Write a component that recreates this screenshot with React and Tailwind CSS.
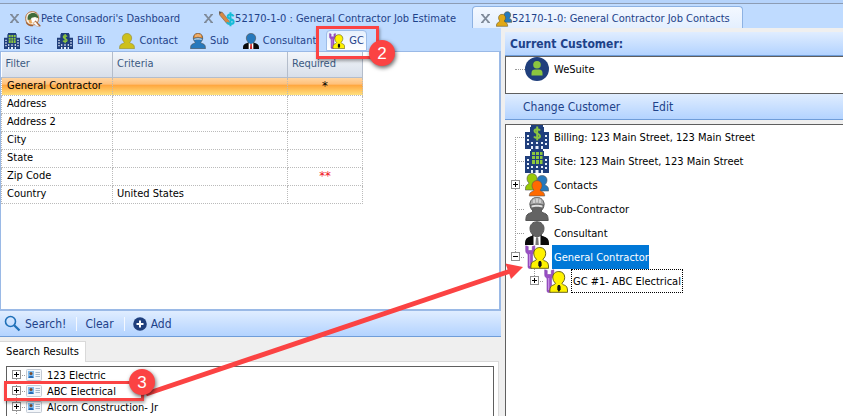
import React, { useState } from 'react';

/* ---------- Icons ---------- */

const Building = ({ size = 16, dollar = false }) => (
  <svg width={size} height={size} viewBox="0 0 24 24" className="shrink-0">
    <path fill="#203f7c" d="M6 0h12v2h1v5h5v17H0V7h5V2h1z" />
    <path
      fill="#e8f0fb"
      d="M2 10h2v2H2zM2 14h2v2H2zM2 18h2v2H2zM20 10h2v2h-2zM20 14h2v2h-2zM20 18h2v2h-2zM6 17h2v2H6zM11 17h2v2h-2zM16 17h2v2h-2zM6 21h2v3H6zM10.500 21h3v3h-3zM16 21h2v3h-2z"
    />
    {dollar ? (
      <path
        fill="none"
        stroke="#8cc63f"
        strokeWidth="2"
        d="M15 5.500C14 3.600 9.500 3.600 9.500 6S15 8.500 15 11S10.500 13.800 9 11.500M12.200 1.500v14"
      />
    ) : (
      <path fill="#8cc63f" d="M7 3h3v3H7zM11 3h3v3h-3zM15 3h2.500v3H15zM7 7h3v3H7zM11 7h3v3h-3zM15 7h2.500v3H15zM7 11h3v4H7zM11 11h3v4h-3zM15 11h2.500v4H15z" />
    )}
  </svg>
);

const bodyPath =
  'M12 .7C8 .7 5 3.500 5 7.500c0 3 1.500 5 3 6.500-1 2-3 1.700-5 3C1.200 18.300 1 20 .8 23.500h22.400c-.2-3.500-.4-5.200-2.200-6.500-2-1.300-4-1-5-3 1.500-1.500 3-3.500 3-6.500 0-4-3-6.800-7-6.800z';

const Person = ({ size = 16, fill, stroke = '#555', helmet, suit }) => (
  <svg width={size} height={size} viewBox="0 0 24 24" className="shrink-0">
    <path d={bodyPath} fill={fill} stroke={stroke} strokeWidth="1" />
    {helmet && (
      <>
        <path d="M5 8C5 3 8 .3 12 .3S19 3 19 8c-4-1.500-10-1.500-14 0z" fill={helmet} stroke={stroke} strokeWidth=".6" />
        <path d="M9 6V2.500M12 5.500V1.500M15 6V2.500" stroke="#f4f4f4" strokeWidth="1" />
        <path d="M6.500 8.500c3-1 8-1 11 0v2c-3-1-8-1-11 0z" fill="#e2e2e2" />
      </>
    )}
    {suit && (
      <>
        <path d="M0 24c0-4 .5-6.500 3-7.500l5-2 4 2 4-2 5 2c2.500 1 3 3.500 3 7.500z" fill="#0a0a0a" />
        <path d="M8.500 15l3.500 1.500 3.500-1.500v9h-7z" fill="#fff" />
        <path d="M11 16.500h2.200l.6 7.500h-3.400z" fill={suit} />
      </>
    )}
  </svg>
);

const GcIcon = ({ size = 16 }) => (
  <svg width={size} height={size} viewBox="0 0 24 24" className="shrink-0">
    <path
      d="M.7.800v5c0 2 1.300 3 2.300 3.500V22c0 2 4.500 2 4.500 0V9.300C8.500 8.800 9.800 7.800 9.800 5.800v-5L7.300 1.500v4H3.200v-4z"
      fill="#9a4fc4"
      stroke="#8344ae"
      strokeWidth=".6"
    />
    <path d="M4.700 9v12" stroke="#cf9fec" strokeWidth="1" />
    <path
      d="M14.800 2.500c-3.700 0-6 2.500-6 5.800 0 2.500 1 4.500 2.700 5.900-.7 1.800-2.300 1.600-3.800 2.600-1.600 1.200-1.800 3-1.900 6.500h17.800c-.1-3.500-.3-5.300-1.900-6.500-1.500-1-3.100-.8-3.800-2.600 1.700-1.400 2.800-3.400 2.800-5.900 0-3.300-2.300-5.800-5.900-5.800z"
      fill="#fff200"
      stroke="#6b651c"
      strokeWidth="1"
    />
    <path d="M14 16h1.800l.8 1.800v2.700L14.900 23l-1.600-2.500v-2.700z" fill="#141414" />
  </svg>
);

const Group = ({ size = 16 }) => (
  <svg width={size} height={size} viewBox="0 0 24 24" className="shrink-0" stroke="#555" strokeWidth=".6">
    <path d="M17 2.500c-3 0-4.800 2-4.800 4.500 0 2 .8 3.500 2 4.500-.8 2-3.200 1-3.200 6.500h12.700c0-6-2.900-4.500-3.700-6.500 1.200-1 2-2.500 2-4.500 0-2.500-2-4.500-5-4.500z" fill="#2679bd" />
    <path d="M7 .5C4 .5 2 2.700 2 5.500c0 2 .8 3.500 2 4.500C3.200 12 .3 11 .3 17H13c0-6-2.200-5-3-7 1.200-1 2-2.500 2-4.500C12 2.700 10 .5 7 .5z" fill="#99c906" />
    <path d="M12 7.500c-3 0-5 2.200-5 5 0 2 .8 3.500 2 4.500-.8 2-4.700 1-4.700 6h15.400c0-5-3.900-4-4.700-6 1.200-1 2-2.500 2-4.500 0-2.800-2-5-5-5z" fill="#ff6a00" />
  </svg>
);

const Pair = () => (
  <svg width="16" height="16" viewBox="0 0 24 24" className="shrink-0" stroke="#5b5020" strokeWidth=".8">
    <path d="M17 1c-3 0-5 2.200-5 5 0 2 .8 3.500 2 4.500-.8 2-3 1-3 6.500h12.700c0-6-2.900-4.500-3.700-6.500 1.200-1 2-2.500 2-4.500 0-2.800-2-5-5-5z" fill="#2679bd" />
    <path d="M9 5c-3.200 0-5.200 2.300-5.200 5.300 0 2 .8 3.700 2 4.700-.8 2.200-5.300 1.500-5.300 8h17c0-6.500-4.500-5.800-5.300-8 1.200-1 2-2.700 2-4.700C14.200 7.300 12.200 5 9 5z" fill="#e0a816" />
  </svg>
);

const DashboardIcon = () => (
  <svg width="16" height="16" viewBox="0 0 24 24" className="shrink-0">
    <path d="M11 1c6 0 9.500 4 9.500 9.500S18 21 11 21 1 17 1 11 5 1 11 1z" fill="#f8efe0" stroke="#b5713e" strokeWidth="1.500" />
    <path d="M4 13c-1-7 3-10 8-10 5 0 8 3 8 8l-5-2-5 1-2 4z" fill="#3f6b3a" />
    <path d="M5 13h5l1 5-4 1z" fill="#e9a95e" />
    <path d="M10 11l6-1 2 5-4 3-4-2z" fill="#fff" />
    <path d="M2 17c2 4 6 5 10 5M15 15l8 8" stroke="#a45f30" strokeWidth="2" fill="none" />
    <path d="M12 18l4-2 5 7h-3z" fill="#fff" stroke="#c79067" strokeWidth=".8" />
  </svg>
);

const EstimateIcon = () => (
  <svg width="16" height="16" viewBox="0 0 24 24" className="shrink-0">
    <path d="M0 1l5 1 11 14v4l-4-1L1 6z" fill="#d98942" stroke="#7a6a5a" strokeWidth="1" />
    <path d="M0 1l4 .8L1 5z" fill="#555" />
    <path
      d="M22 8c-2-4-9-3.500-9 .5s9 3 9 7.500-8 4.500-10 1M17.200 2v21"
      fill="none"
      stroke="#16bcd8"
      strokeWidth="3"
    />
  </svg>
);

const CardIcon = () => (
  <svg width="16" height="12" viewBox="0 0 16 12" className="shrink-0">
    <rect x=".5" y=".5" width="15" height="11" rx="1" fill="#f3f6fa" stroke="#c3cad4" />
    <rect x="2" y="2" width="6" height="7" fill="#7fbcf0" />
    <circle cx="5" cy="4.500" r="1.500" fill="#7c4a2a" />
    <path d="M2.500 9c0-3 5-3 5 0z" fill="#2569b5" />
    <path d="M9.500 3.500H14M9.500 5.500H14M9.500 7.500H14" stroke="#a3b6ca" />
  </svg>
);

const SearchIcon = () => (
  <svg width="17" height="17" viewBox="0 0 17 17" className="shrink-0" fill="none" stroke="#1f70b8">
    <circle cx="6.500" cy="6.500" r="5" strokeWidth="1.600" />
    <path d="M10.200 10.200l5.300 5.300" strokeWidth="2.300" />
  </svg>
);

const AddIcon = () => (
  <svg width="14" height="14" viewBox="0 0 14 14" className="shrink-0">
    <circle cx="7" cy="7" r="6.800" fill="#1f3f7d" />
    <path d="M7 3.500v7M3.500 7h7" stroke="#fff" strokeWidth="2" />
  </svg>
);

const CustomerIcon = () => (
  <svg width="24" height="24" viewBox="0 0 24 24" className="shrink-0">
    <circle cx="12" cy="12" r="12" fill="#203f7c" />
    <circle cx="12" cy="7.800" r="3.800" fill="#8cc63f" />
    <path d="M6.500 18.500V16c0-2.500 1.500-3.500 3.500-3.500h4c2 0 3.500 1 3.500 3.500v2.500z" fill="#8cc63f" />
  </svg>
);

const CloseIcon = () => (
  <svg width="9" height="9" viewBox="0 0 9 9">
    <path d="M1 .5l7 8M8 .5l-7 8" stroke="#7f8a99" strokeWidth="1.800" />
    <path d="M0 .5h2.500M6.500.5H9M0 8.500h2.500M6.500 8.500H9" stroke="#7f8a99" />
  </svg>
);

/* ---------- Tree connectors ---------- */

// Dotted guide lines, with an optional plus / minus box on top
const Connector = ({ height, first, last, state, onToggle, label }) => {
  const mid = height / 2;
  const lines = (
    <svg width="18" height={height} viewBox={`0 0 18 ${height}`} className="block shrink-0">
      <g stroke="#999" strokeDasharray="1 1" shapeRendering="crispEdges">
        <path d={`M8.500 ${first ? mid : 0}V${last ? mid : height}`} />
        <path d={`M8 ${mid + 0.5}H18`} />
      </g>
      {state && (
        <g shapeRendering="crispEdges">
          <rect x="4.500" y={mid - 4.5} width="8" height="8" fill="#fff" stroke="#919191" />
          <path d={`M6 ${mid - 0.5}h5`} stroke="#000" />
          {state === 'closed' && <path d={`M8.500 ${mid - 3}v5`} stroke="#000" />}
        </g>
      )}
    </svg>
  );
  if (!state) return lines;
  return (
    <button type="button" aria-label={label} onClick={onToggle} className="shrink-0">
      {lines}
    </button>
  );
};

/* ---------- Data ---------- */

const tabs = [
  { label: "Pete Consadori's Dashboard", icon: <DashboardIcon />, box: 'pl-2.5' },
  { label: '52170-1-0 : General Contractor Job Estimate', icon: <EstimateIcon />, box: 'pl-6 pr-4' },
  { label: '52170-1-0: General Contractor Job Contacts', icon: <Pair />, active: true },
];

const filters = [
  { name: 'General Contractor', required: '*', selected: true },
  { name: 'Address' },
  { name: 'Address 2' },
  { name: 'City' },
  { name: 'State' },
  { name: 'Zip Code', required: '**' },
  { name: 'Country', criteria: 'United States' },
];

const results = ['123 Electric', 'ABC Electrical', 'Alcorn Construction- Jr'];

const contacts = [
  { label: 'Billing: 123 Main Street, 123 Main Street', icon: <Building size={24} dollar /> },
  { label: 'Site: 123 Main Street, 123 Main Street', icon: <Building size={24} /> },
  { label: 'Contacts', icon: <Group size={24} />, state: 'closed' },
  { label: 'Sub-Contractor', icon: <Person size={24} fill="#636363" helmet="#aaa" /> },
  { label: 'Consultant', icon: <Person size={24} fill="#636363" suit="#777" /> },
];

const bar = 'bg-linear-to-b from-[#e0edff] to-[#b3d3ff] border-b border-[#6f9dd9]';

const Badge = ({ children, place }) => (
  <span
    className={`absolute z-10 flex size-[26px] items-center justify-center rounded-full bg-[#fb4343] font-['Liberation_Sans',sans-serif] text-[17px] leading-none text-white shadow-[1px_2px_4px_rgba(0,0,0,0.6)] ${place}`}
  >
    {children}
  </span>
);

const ToolButton = ({ icon, label, box = '' }) => (
  <button type="button" className={`flex items-center gap-1 ${box}`}>
    {icon}
    {label}
  </button>
);

/* ---------- Page ---------- */

const App = () => {
  const [gcOpen, setGcOpen] = useState(true);

  return (
    <div className="relative flex h-screen flex-col overflow-hidden bg-[#efefef] font-['DejaVu_Sans_Condensed','Noto_Sans',sans-serif] text-[11px] leading-4 text-black">
      {/* Document tabs */}
      <div className="h-[3px] shrink-0 bg-[#b5d3fb]" />
      <nav className="flex h-[25px] shrink-0 items-end border-t border-[#8c9cb4] bg-[#bfdbff] text-[#1e4289]">
        {tabs.map((tab) => (
          <div
            key={tab.label}
            className={
              tab.active
                ? 'flex h-[22px] items-center rounded-t-sm border border-b-0 border-[#8db2e3] bg-linear-to-b from-[#f3f8ff] to-[#e4effe] pt-0.5 pr-3 pl-2'
                : `flex h-[22px] items-center pt-[3px] ${tab.box}`
            }
          >
            <button type="button" aria-label={`Close ${tab.label}`} className="mr-1.5">
              <CloseIcon />
            </button>
            <button type="button" className="flex items-center whitespace-nowrap">
              {tab.icon}
              {tab.label}
            </button>
          </div>
        ))}
      </nav>

      <div className="grid min-h-0 flex-1 grid-cols-[501fr_338fr] gap-x-1">
        {/* Left side: filters and search results */}
        <section className="flex min-h-0 min-w-0 flex-col">
          <div className="flex h-[23px] shrink-0 items-center bg-[#bfdbff] pt-0.5 pl-1 text-[#1e4289]">
            <ToolButton icon={<Building />} label="Site" box="mr-3.5" />
            <ToolButton icon={<Building dollar />} label="Bill To" box="mr-3.5" />
            <ToolButton icon={<Person fill="#cdc01c" stroke="#96903a" />} label="Contact" box="mr-3" />
            <ToolButton icon={<Person fill="#2679bd" helmet="#e88b2d" />} label="Sub" box="mr-3.5" />
            <ToolButton icon={<Person fill="#2679bd" suit="#d12a2a" />} label="Consultant" box="mr-2.5" />
            <div className="relative">
              <button
                type="button"
                aria-pressed="true"
                className="flex h-[21px] items-center gap-1 rounded-t-sm border border-[#9dbde8] bg-linear-to-b from-[#e6f0fd] to-white px-0.5"
              >
                <GcIcon />
                GC
              </button>
              <span className="absolute -top-1 -right-3 -bottom-2 -left-2.5 z-10 border-3 border-[#fb4343] shadow-[1px_2px_3px_rgba(0,0,0,0.35)]" />
              <Badge place="-right-7 top-2.5">2</Badge>
            </div>
          </div>

          <div className="h-[260px] shrink-0 border border-r-2 border-b-2 border-[#9ab9e6] bg-white">
            <table className="w-[361px] table-fixed border-collapse text-left">
              <colgroup>
                <col className="w-[111px]" />
                <col className="w-[175px]" />
                <col className="w-[75px]" />
              </colgroup>
              <thead>
                <tr className="h-[25px] bg-linear-to-b from-[#f3f6fa] to-[#d8dfea] text-[#3b5a82]">
                  <th className="border-r border-b border-[#b4bdcb] px-1 font-normal">Filter</th>
                  <th className="border-r border-b border-[#b4bdcb] px-1 font-normal">Criteria</th>
                  <th className="border-r border-b border-[#b4bdcb] px-1 font-normal">Required</th>
                </tr>
              </thead>
              <tbody>
                {filters.map((row) => (
                  <tr
                    key={row.name}
                    className={
                      row.selected
                        ? 'h-[18px] bg-[linear-gradient(#ffd9a8_0%,#ffc07a_40%,#ffa63e_45%,#ffe07e_100%)]'
                        : 'h-[18px]'
                    }
                  >
                    <td className="border border-dotted border-[#bbb] p-0 pl-[5px] whitespace-nowrap">{row.name}</td>
                    <td className="border border-dotted border-[#bbb] p-0 pl-1">{row.criteria}</td>
                    <td
                      className={`border border-dotted border-[#bbb] p-0 text-center text-[13px] ${
                        row.selected ? 'text-black' : 'text-[#f01020]'
                      }`}
                    >
                      {row.required}
                    </td>
                  </tr>
                ))}
              </tbody>
            </table>
          </div>

          <div className={`flex h-[26px] shrink-0 items-center pl-1 text-[12px] text-[#1e4289] ${bar}`}>
            <ToolButton icon={<SearchIcon />} label="Search!" />
            <span className="mr-2 ml-2.5 h-3.5 w-px bg-[#f4f8ff]" />
            <ToolButton label="Clear" />
            <span className="mr-2 ml-2.5 h-3.5 w-px bg-[#f4f8ff]" />
            <ToolButton icon={<AddIcon />} label="Add" />
          </div>

          <div className="mt-1 flex h-5 shrink-0">
            <button type="button" className="z-1 -mb-px w-[86px] border-t border-r border-[#d9d9d9] bg-white">
              Search Results
            </button>
          </div>
          <div className="mr-0.5 min-h-0 flex-1 border-t border-r border-[#d9d9d9] bg-white pt-1 pr-1 pl-1.5">
            <div className="h-full border border-b-0 border-[#5f5f5f]">
              {results.map((name, i) => (
                <div key={name} className="relative flex h-4 items-center pl-px">
                  <Connector height={16} first={i === 0} state="closed" label={`Expand ${name}`} />
                  <CardIcon />
                  <span className="ml-[5px] pt-px">{name}</span>
                  {i === 1 && (
                    <>
                      <span className="absolute -top-0.5 -left-[3px] z-10 h-5 w-[140px] border-3 border-[#fb4343] shadow-[1px_2px_3px_rgba(0,0,0,0.35)]" />
                      <Badge place="left-[122px] -top-3.5">3</Badge>
                    </>
                  )}
                </div>
              ))}
            </div>
          </div>
        </section>

        {/* Right side: current customer and job contacts */}
        <section className="flex min-h-0 min-w-0 flex-col pt-1">
          <h2 className={`flex h-6 shrink-0 items-center pl-[5px] text-[12px] font-bold text-[#1e4289] ${bar}`}>
            Current Customer:
          </h2>
          <div className="h-[38px] shrink-0 border border-r-0 border-[#5f5f5f] bg-white">
            <div className="flex h-6 items-center pl-[9px]">
              <span className="w-2.5 border-t border-dotted border-[#999]" />
              <CustomerIcon />
              <span className="ml-[5px] pt-px">WeSuite</span>
            </div>
          </div>
          <div className={`flex h-[26px] shrink-0 items-center gap-8 pl-[18px] text-[12px] text-[#1e4289] ${bar}`}>
            <button type="button">Change Customer</button>
            <button type="button">Edit</button>
          </div>
          <div className="mt-1 min-h-0 flex-1 border border-r-0 border-b-0 border-[#5f5f5f] bg-white">
            {contacts.map((item, i) => (
              <div key={item.label} className="flex h-6 items-center pl-px">
                <Connector height={24} first={i === 0} state={item.state} label={`Expand ${item.label}`} />
                {item.icon}
                <span className="ml-[5px] pt-px">{item.label}</span>
              </div>
            ))}
            <div className="flex h-6 items-center pl-px">
              <Connector
                height={24}
                last
                state={gcOpen ? 'open' : 'closed'}
                onToggle={() => setGcOpen(!gcOpen)}
                label="Toggle General Contractor"
              />
              <GcIcon size={24} />
              <span className="ml-[3px] flex h-6 items-center bg-[#0078d7] pt-px pl-0.5 text-white">
                General Contractor
              </span>
            </div>
            {gcOpen && (
              <div className="flex h-6 items-center pl-5">
                <Connector height={24} last state="closed" label="Expand GC #1- ABC Electrical" />
                <GcIcon size={24} />
                <span className="ml-[3px] flex h-6 items-center border border-dotted border-black px-px pt-px">
                  GC #1- ABC Electrical
                </span>
              </div>
            )}
          </div>
        </section>
      </div>

      {/* Arrow from the chosen result to the contact tree */}
      <svg width="843" height="416" viewBox="0 0 843 416" className="pointer-events-none absolute top-0 left-0">
        <path d="M146 394L509 271.500" stroke="#fb4343" strokeWidth="5" />
        <path d="M523 267L505.500 263.500L511 279z" fill="#fb4343" />
      </svg>
    </div>
  );
};

export default App;
